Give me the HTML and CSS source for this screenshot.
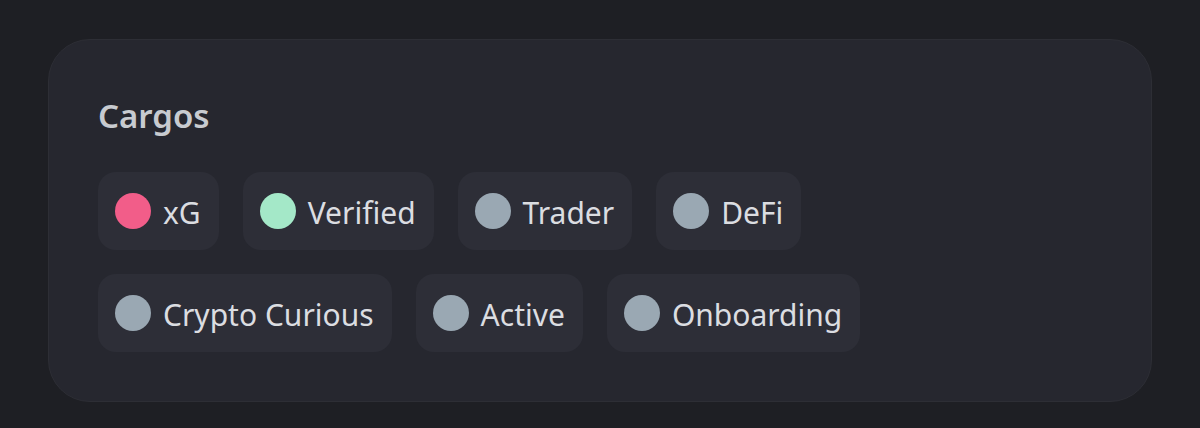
FILE: index.html
```html
<!DOCTYPE html>
<html>
<head>
<meta charset="utf-8">
<link rel="stylesheet" href="styles.css">
</head>
<body>
<section class="card">
  <h2 class="title">Cargos</h2>
  <div class="roles">
    <div class="row">
      <div class="role"><span class="dot pink"></span><span class="name">xG</span></div>
      <div class="role"><span class="dot green"></span><span class="name">Verified</span></div>
      <div class="role"><span class="dot gray"></span><span class="name">Trader</span></div>
      <div class="role"><span class="dot gray"></span><span class="name">DeFi</span></div>
    </div>
    <div class="row">
      <div class="role"><span class="dot gray"></span><span class="name">Crypto Curious</span></div>
      <div class="role"><span class="dot gray"></span><span class="name">Active</span></div>
      <div class="role"><span class="dot gray"></span><span class="name">Onboarding</span></div>
    </div>
  </div>
</section>
</body>
</html>
```
FILE: styles.css
```css
html, body {
  margin: 0;
  padding: 0;
  background: #1e1f24;
  height: 100%;
}
body {
  padding: 39px 48px 0 48px;
  box-sizing: border-box;
  font-family: "Noto Sans", "Open Sans", sans-serif;
}
.card {
  box-sizing: border-box;
  width: 1104px;
  height: 363px;
  background: #26272f;
  border: 1px solid #2d2e35;
  border-radius: 42px;
  padding: 56px 49px 0 49px;
}
.title {
  margin: 0;
  font-size: 33px;
  line-height: 40px;
  font-weight: 600;
  color: #c8cbd0;
}
.roles {
  margin-top: 36px;
  display: flex;
  flex-direction: column;
  gap: 24px;
}
.row {
  display: flex;
  gap: 24px;
}
.role {
  display: flex;
  align-items: center;
  height: 78px;
  box-sizing: border-box;
  padding: 0 18px 0 17px;
  gap: 12px;
  background: #2d2e37;
  border-radius: 18px;
}
.dot {
  width: 36px;
  height: 36px;
  border-radius: 50%;
  flex: none;
}
.pink { background: #f25d89; }
.green { background: #a4e8c8; }
.gray { background: #9aa8b3; }
.name {
  font-size: 30px;
  color: #dbdde1;
  line-height: 36px;
  margin-top: 4px;
}
```
